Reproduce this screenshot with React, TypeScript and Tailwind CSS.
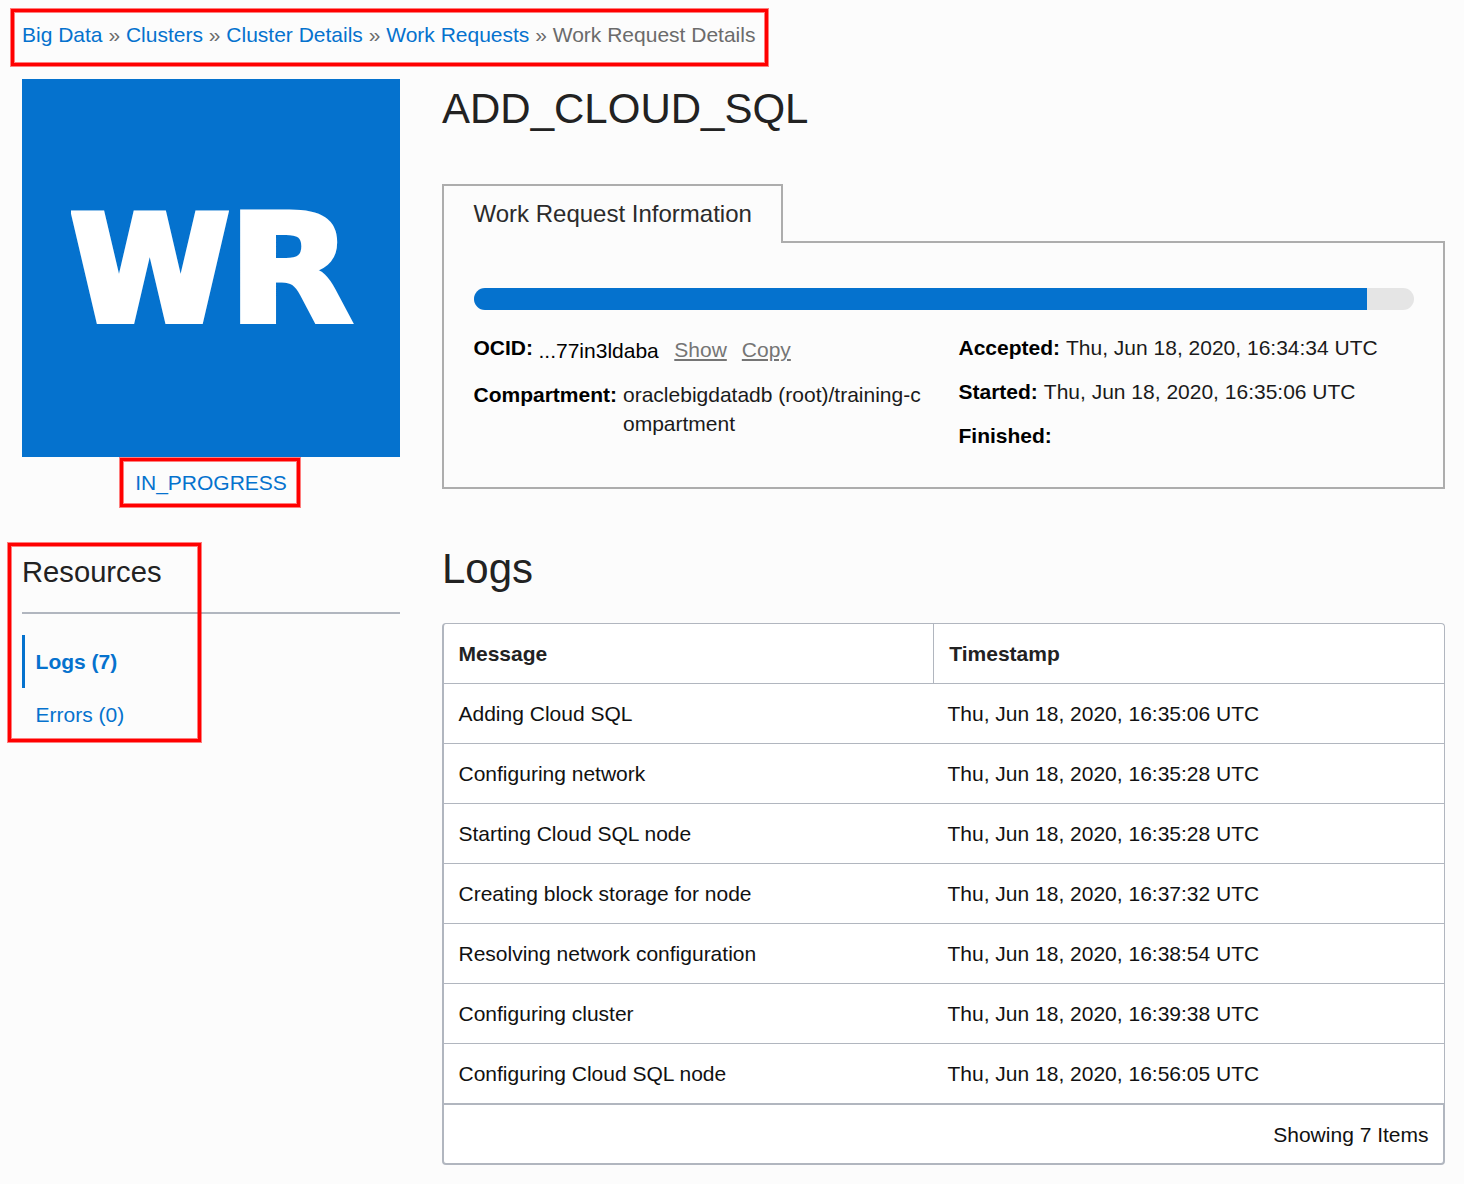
import React from "react";

const crumbs = ["Big Data", "Clusters", "Cluster Details", "Work Requests"];

const logs = [
  ["Adding Cloud SQL", "Thu, Jun 18, 2020, 16:35:06 UTC"],
  ["Configuring network", "Thu, Jun 18, 2020, 16:35:28 UTC"],
  ["Starting Cloud SQL node", "Thu, Jun 18, 2020, 16:35:28 UTC"],
  ["Creating block storage for node", "Thu, Jun 18, 2020, 16:37:32 UTC"],
  ["Resolving network configuration", "Thu, Jun 18, 2020, 16:38:54 UTC"],
  ["Configuring cluster", "Thu, Jun 18, 2020, 16:39:38 UTC"],
  ["Configuring Cloud SQL node", "Thu, Jun 18, 2020, 16:56:05 UTC"],
];

const progress = 95;

function Highlight({ className }: { className: string }) {
  return (
    <div
      className={`pointer-events-none absolute border-[3px] border-[#ff0000] shadow-[0_0_0_1px_rgba(255,0,0,0.5),inset_0_0_0_1px_rgba(255,0,0,0.5)] ${className}`}
    />
  );
}

function Breadcrumbs() {
  return (
    <nav className="relative h-[79px] pt-5 pl-[22px] whitespace-pre text-[#6b6b6b]">
      {crumbs.map((c) => (
        <React.Fragment key={c}>
          <a className="text-[#0572ce]">{c}</a>
          {" » "}
        </React.Fragment>
      ))}
      <span>Work Request Details</span>
      <Highlight className="top-[9px] left-[11px] h-[57px] w-[757px]" />
    </nav>
  );
}

function Sidebar() {
  return (
    <aside className="w-[378px] shrink-0">
      <div className="flex h-[378px] items-center overflow-hidden bg-[#0572ce] pl-[49px] font-['DejaVu_Sans'] leading-none font-bold text-white">
        <span className="origin-left scale-x-[0.985] pt-[2px] text-[145px] [-webkit-text-stroke:8px_white]">W</span>
        <span className="-ml-[3px] origin-left scale-x-[1.08] pt-[2px] text-[150px] [-webkit-text-stroke:5px_white]">R</span>
      </div>
      <div className="relative mt-[11px] text-center text-[#0572ce]">
        IN_PROGRESS
        <Highlight className="-top-[10px] left-[98px] h-[49px] w-[180px]" />
      </div>
      <section className="relative mt-[54px]">
        <h2 className="h-[62px] border-b-2 border-[#b1b6bf] text-[29.2px] leading-[40px] text-[#222]">Resources</h2>
        <ul className="mt-[21px] leading-[53px] text-[#0572ce]">
          <li className="border-l-[3px] border-[#0572ce] pl-[10.6px] font-bold">Logs (7)</li>
          <li className="pl-[13.6px]">Errors (0)</li>
        </ul>
        <Highlight className="-top-[9px] -left-[14px] h-[199px] w-[193px]" />
      </section>
    </aside>
  );
}

function Info() {
  return (
    <section className="mt-[50px]">
      <div className="relative h-[59px] w-[341px] border-2 border-b-0 border-[#adadad] bg-[#fcfcfc] pl-[29.5px] text-2xl leading-[56px] text-[#2b2b2b]">
        Work Request Information
      </div>
      <div className="-mt-[2px] h-[248px] border-2 border-[#adadad] px-[30px] pt-[45px]">
        <div className="h-[22px] w-[939.5px] overflow-hidden rounded-full bg-[#e5e5e5]">
          <div className="h-full bg-[#0572ce]" style={{ width: `${progress}%` }} />
        </div>
        <div className="mt-[23px] -ml-[0.5px] flex text-black">
          <div className="w-[485px]">
            <div className="flex h-[47px]">
              <b>OCID:</b>
              <span className="ml-[5.5px] pt-[3px]">...77in3ldaba</span>
              <a className="ml-[15.5px] pt-[2px] text-[#757575] underline">Show</a>
              <a className="ml-[15px] pt-[2px] text-[#757575] underline">Copy</a>
            </div>
            <div className="flex">
              <b>Compartment:</b>
              <span className="ml-[6px] w-[305px] leading-[29px] break-all text-[#1a1a1a]">
                oraclebigdatadb (root)/training-compartment
              </span>
            </div>
          </div>
          <div className="flex flex-col gap-[14px] text-[#1a1a1a]">
            <div><b className="mr-[0.5px] text-black">Accepted:</b> Thu, Jun 18, 2020, 16:34:34 UTC</div>
            <div><b className="mr-[0.5px] text-black">Started:</b> Thu, Jun 18, 2020, 16:35:06 UTC</div>
            <div><b className="text-black">Finished:</b></div>
          </div>
        </div>
      </div>
    </section>
  );
}

function LogTable() {
  return (
    <div className="mt-[29px] leading-[59px] text-[#111]">
      <div className="rounded-t-[4px] border border-b-0 border-l-2 border-[#b1b6bf] bg-white">
        <div className="flex font-bold text-[#222]">
          <div className="w-[490px] border-r border-[#b1b6bf] pl-[14.5px]">Message</div>
          <div className="pl-[15.3px]">Timestamp</div>
        </div>
        {logs.map(([message, time]) => (
          <div key={message} className="flex border-t border-[#b1b6bf]">
            <div className="w-[503.5px] pl-[14.5px]">{message}</div>
            <div>{time}</div>
          </div>
        ))}
      </div>
      <div className="h-[62px] rounded-b-[4px] border-2 border-[#b1b6bf] bg-white pr-[14.5px] text-right">
        Showing 7 Items
      </div>
    </div>
  );
}

export default function App() {
  return (
    <div className="h-[1184px] w-[1464px] overflow-hidden bg-[#fcfcfc] font-['Liberation_Sans',Arial,sans-serif] text-[21px] leading-[30px]">
      <Breadcrumbs />
      <div className="flex gap-[42px] pl-[22px]">
        <Sidebar />
        <main className="w-[1003px]">
          <h1 className="mt-[5px] text-[42px] leading-[50px] text-[#222]">ADD_CLOUD_SQL</h1>
          <Info />
          <h2 className="mt-[55px] text-[42px] leading-[50px] text-[#222]">Logs</h2>
          <LogTable />
        </main>
      </div>
    </div>
  );
}
